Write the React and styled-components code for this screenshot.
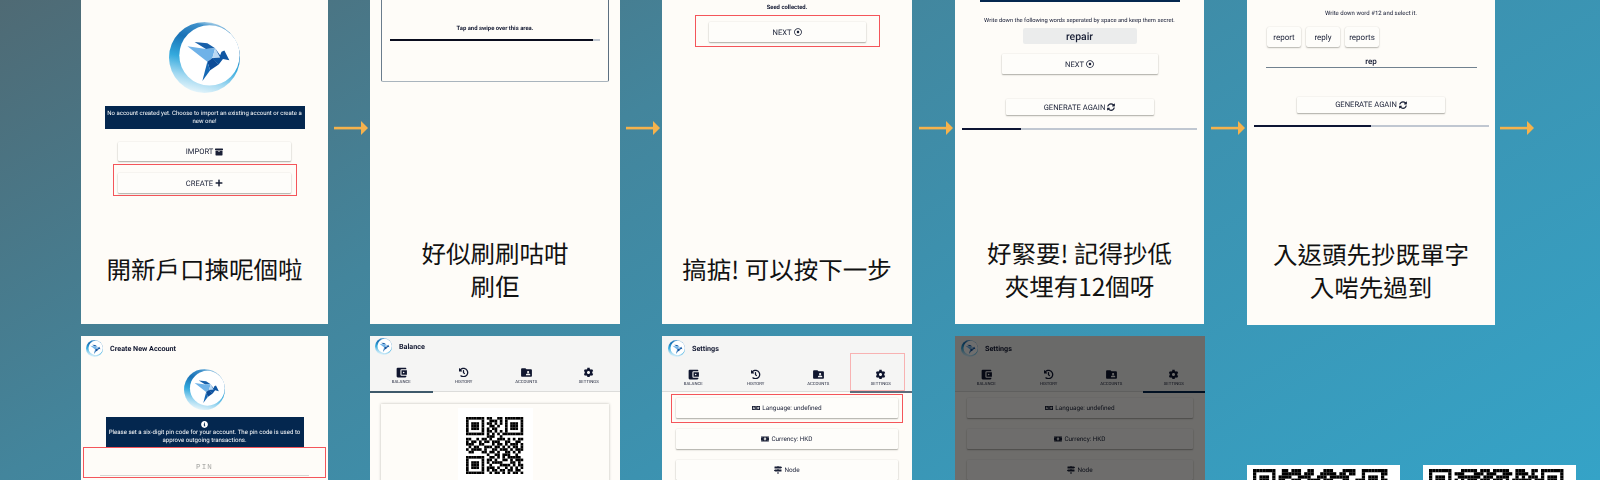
import React, { useId } from "react";
import styled, { createGlobalStyle } from "styled-components";
import {
  FaArchive, FaPlus, FaRegDotCircle, FaSyncAlt, FaHistory, FaCog,
  FaLanguage, FaMoneyBillAlt, FaMapSigns, FaInfoCircle,
} from "react-icons/fa";
import { MdAccountBalanceWallet, MdFolderShared } from "react-icons/md";

const Global = createGlobalStyle`
  html, body { margin: 0; padding: 0; height: 480px; overflow: hidden; }
  body {
    font-family: Roboto, "Liberation Sans", sans-serif;
    text-rendering: geometricPrecision;
  }
`;

const Page = styled.div`
  width: 1600px;
  height: 480px;
  overflow: hidden;
  display: flex;
  flex-direction: column;
  gap: 12px;
  padding-left: 81px;
  box-sizing: border-box;
  background: linear-gradient(150deg, #4f6a74 0%, #43859c 34%, #3c92b0 60%, #35a3c7 100%);
`;
const TopRow = styled.div`
  display: flex;
  height: 324px;
  flex: none;
`;
const BottomRow = styled.div`
  display: flex;
  height: 144px;
  flex: none;
`;
const Card = styled.section`
  position: relative;
  width: ${(p) => p.$w}px;
  height: ${(p) => p.$h || 324}px;
  flex: none;
  display: flex;
  flex-direction: column;
  overflow: hidden;
  background: #fefcf8;
  color: #10162f;
`;
const Screen = styled.div`
  flex: 1;
  min-height: 0;
  display: flex;
  flex-direction: column;
  align-items: center;
  filter: blur(0.25px);
`;
const Caption = styled.div`
  height: 108px;
  flex: none;
  display: flex;
  align-items: center;
  justify-content: center;
  text-align: center;
  font-family: "Noto Sans CJK TC", "Noto Sans CJK SC", sans-serif;
  font-size: 24.5px;
  font-weight: 400;
  line-height: 33.5px;
  color: #111;
`;
const ArrowSlot = styled.div`
  width: ${(p) => p.$w}px;
  flex: none;
  display: flex;
  justify-content: flex-end;
  padding: 121px 2px 0 0;
  box-sizing: border-box;
`;
const Gutter = styled.div`
  width: ${(p) => p.$w}px;
  flex: none;
`;
const Banner = styled.div`
  width: ${(p) => p.$w}px;
  height: ${(p) => p.$h}px;
  margin-top: ${(p) => p.$top}px;
  flex: none;
  display: flex;
  flex-direction: column;
  align-items: center;
  justify-content: center;
  padding: 0 2px;
  box-sizing: border-box;
  background: #04274f;
  color: #fff;
  font-size: ${(p) => p.$size}px;
  line-height: 7.6px;
  text-align: center;
`;
const ActionButton = styled.div`
  width: ${(p) => p.$w}px;
  height: ${(p) => p.$h || 20}px;
  margin-top: ${(p) => p.$top || 0}px;
  flex: none;
  display: flex;
  align-items: center;
  justify-content: center;
  gap: 2px;
  background: #fefdfa;
  border-radius: 1px;
  box-shadow: 0 1px 1.5px rgba(60, 60, 50, 0.4), 0 0 1.5px rgba(60, 60, 50, 0.14);
  color: #1a2036;
  font-size: ${(p) => (p.$plain ? 6.4 : 7.6)}px;
  text-transform: ${(p) => (p.$plain ? "none" : "uppercase")};
  svg { font-size: 8px; flex: none; }
`;
const RedFrame = styled.div`
  width: ${(p) => p.$w}px;
  height: ${(p) => p.$h}px;
  margin-top: ${(p) => p.$top}px;
  flex: none;
  display: flex;
  flex-direction: column;
  align-items: center;
  box-sizing: border-box;
  padding-top: ${(p) => p.$pad}px;
  border: 1.2px solid #f4555a;
`;
const SwipePanel = styled.div`
  width: 228px;
  height: 82px;
  flex: none;
  display: flex;
  flex-direction: column;
  align-items: center;
  padding-top: 24px;
  box-sizing: border-box;
  border-left: 1px solid #6a7c8c;
  border-right: 1px solid #5d6f80;
  border-bottom: 1px solid #a9b4bd;
  border-bottom-left-radius: 2px;
  border-bottom-right-radius: 2px;
`;
const Note = styled.div`
  margin-top: ${(p) => p.$top || 0}px;
  flex: none;
  height: 10px;
  line-height: 10px;
  font-size: ${(p) => p.$size || 6}px;
  font-weight: ${(p) => p.$weight || 400};
  white-space: nowrap;
  color: #10162f;
`;
const Track = styled.div`
  width: ${(p) => p.$w}px;
  height: ${(p) => p.$h || 2}px;
  margin-top: ${(p) => p.$top}px;
  flex: none;
  display: flex;
  background: #c0c7d1;
`;
const TrackFill = styled.div`
  width: ${(p) => p.$fill}%;
  background: ${(p) => p.$color || "#0d1533"};
`;
const WordBox = styled.div`
  width: 114px;
  height: 16px;
  margin-top: 2px;
  flex: none;
  display: flex;
  align-items: center;
  justify-content: center;
  border-radius: 2px;
  background: #ebecec;
  font-size: 10.5px;
  font-weight: 500;
  color: #1a2036;
`;
const ChipRow = styled.div`
  display: flex;
  gap: 5px;
  align-self: flex-start;
  margin: 8px 0 0 20px;
  flex: none;
`;
const Chip = styled.div`
  width: 34px;
  height: 20px;
  display: flex;
  align-items: center;
  justify-content: center;
  border-radius: 2px;
  background: #fefdfa;
  box-shadow: 0 1px 1.5px rgba(60, 60, 50, 0.35), 0 0 1.5px rgba(60, 60, 50, 0.14);
  font-size: 8px;
  color: #1a2036;
`;
const WordInput = styled.div`
  width: 211px;
  height: 10px;
  margin-top: 10px;
  flex: none;
  box-sizing: content-box;
  text-align: center;
  line-height: 10px;
  font-size: 8px;
  font-weight: 500;
  color: #10162f;
  border-bottom: 1.5px solid #71818f;
`;
const AppHeader = styled.header`
  flex: none;
  background: ${(p) => (p.$tabbed ? "#f5f5f4" : "transparent")};
`;
const TitleBar = styled.div`
  display: flex;
  align-items: center;
  gap: 7px;
  height: 17px;
  padding: ${(p) => p.$pad}px 0 0 ${(p) => p.$left}px;
  font-size: 7.2px;
  font-weight: 700;
  color: #10162f;
  filter: blur(0.25px);
`;
const TabBar = styled.nav`
  display: grid;
  grid-template-columns: repeat(4, 1fr);
  border-bottom: 1.5px solid #dcdcda;
`;
const Tab = styled.div`
  position: relative;
  height: ${(p) => p.$h}px;
  display: flex;
  flex-direction: column;
  align-items: center;
  gap: 1.5px;
  box-sizing: border-box;
  padding-top: 10.5px;
  font-size: 4.3px;
  line-height: 6px;
  text-transform: uppercase;
  color: #1a2036;
  svg { flex: none; height: 13px; width: 13px; color: #10162f; }
`;
const TabLabel = styled.span`
  filter: blur(0.2px);
`;
const TabFrame = styled.span`
  position: absolute;
  top: -4px;
  left: 0;
  right: 7px;
  bottom: 0;
  border: 1px solid #f8b2b2;
`;
const TabMark = styled.span`
  position: absolute;
  left: 0;
  right: 0;
  bottom: -1.5px;
  height: 2px;
  background: ${(p) => p.$color};
`;
const StackCol = styled.div`
  display: flex;
  flex-direction: column;
  align-items: center;
  filter: blur(0.25px);
`;
const LogoSlot = styled.div`
  margin-top: ${(p) => p.$top}px;
  flex: none;
  display: flex;
`;
const BalancePanel = styled.div`
  width: 228px;
  height: 90px;
  margin-top: 12px;
  flex: none;
  display: flex;
  justify-content: center;
  background: #fefcf8;
  box-shadow: 0 0 2.5px rgba(60, 60, 50, 0.35);
`;
const QrPad = styled.div`
  width: 75px;
  margin-top: 4px;
  padding-top: 9px;
  display: flex;
  justify-content: center;
  background: #fff;
`;
const PinField = styled.div`
  width: 209px;
  height: 28px;
  box-sizing: border-box;
  padding-top: 16px;
  text-align: center;
  font-family: "Liberation Mono", monospace;
  font-size: 7.5px;
  line-height: 9px;
  letter-spacing: 1.2px;
  color: #a9a9a6;
  border-bottom: 1.5px solid #d6d6d2;
`;
const Dimmer = styled.div`
  position: absolute;
  inset: 0;
  background: rgba(0, 0, 0, 0.57);
`;
const QrTile = styled.div`
  width: 153px;
  height: 15px;
  flex: none;
  align-self: flex-end;
  margin-left: ${(p) => p.$left}px;
  padding: 4px 0 0 6px;
  box-sizing: border-box;
  overflow: hidden;
  background: #fff;
`;

function Logo({ size }) {
  const id = useId();
  return (
    <svg width={size} height={size} viewBox="0 0 100 100" style={{ flex: "none" }}>
      <defs>
        <linearGradient id={id} x1="0.7" y1="0" x2="0.45" y2="1">
          <stop offset="0" stopColor="#d8ecf6" />
          <stop offset="0.1" stopColor="#3e90ca" />
          <stop offset="0.3" stopColor="#1a72b6" />
          <stop offset="0.58" stopColor="#33a9dd" />
          <stop offset="0.82" stopColor="#a0d8f1" />
          <stop offset="1" stopColor="#e2f3fa" />
        </linearGradient>
      </defs>
      <circle cx="50" cy="50" r="50" fill={`url(#${id})`} />
      <circle cx="57" cy="47" r="42.5" fill="#fff" />
      <path d="M62 6 A46 46 0 0 1 98 44 A46 46 0 0 0 62 6Z" fill="#bfe0f2" />
      <polygon points="36,28 54,30 65,37 52,38" fill="#175fa9" />
      <polygon points="26,34 52,38 65,37 61,51 54,56" fill="#6fb2e8" />
      <polygon points="65,37 72,50 61,51" fill="#bcd9f3" />
      <polygon points="65,37 72,47 74,42 78,40 85,54 76,52 70,60 60,51 72,50" fill="#0f56a3" />
      <polygon points="61,51 54,56 58,68 70,60" fill="#0d4c98" />
      <polygon points="54,56 58,68 47,83" fill="#1668b4" />
    </svg>
  );
}

function Arrow() {
  return (
    <svg width="34" height="14" viewBox="0 0 34 14" style={{ flex: "none" }}>
      <rect x="0" y="5.8" width="28" height="2.6" fill="#f5b24c" />
      <polygon points="27,0 34,7 27,14" fill="#f5b24c" />
    </svg>
  );
}

const SMALL_QR = [
  "1111111011001101111111",
  "1000001001110101000001",
  "1011101011010101011101",
  "1011101001101001011101",
  "1011101010110001011101",
  "1000001011010101000001",
  "1111111010101011111111",
  "0000000011100100000000",
  "1100101101001110101011",
  "1011010110111001100110",
  "1110011000101101011101",
  "0101100111011010101101",
  "1011110100110111010111",
  "0110001101101001101010",
  "0000000010011011100100",
  "1111111001101010111110",
  "1000001011010011010111",
  "1011101010111100011010",
  "1011101001000111101011",
  "1011101011101001010101",
  "1000001010110110110110",
  "1111111001011010101101",
];

const TILE_A = [
  "1111111001101110011000111000111100111111110",
  "1000001001111110111001111101101100100000110",
  "1011101011110011110011101111110000101110100",
  "1011101011001110011110111000110011101110110",
  "1011101000111000110011001110011110101110100",
];
const TILE_B = [
  "1111111000111110111011111001110011011111110",
  "1000001011100011101110011101111010010000010",
  "1011101001111111011101111001010111010111010",
  "1011101010101110111011101011111101110111010",
  "1011101011110011010110111100100111010111010",
];

function Qr({ rows, cell }) {
  const cols = rows[0].length;
  return (
    <svg
      width={cols * cell}
      height={rows.length * cell}
      viewBox={`0 0 ${cols} ${rows.length}`}
      style={{ display: "block", flex: "none" }}
    >
      {rows.flatMap((row, y) =>
        [...row].map((v, x) =>
          v === "1" ? <rect key={`${x}-${y}`} x={x} y={y} width="1.02" height="1.02" fill="#000" /> : null
        )
      )}
    </svg>
  );
}

const TABS = [
  ["Balance", <MdAccountBalanceWallet key="b" />],
  ["History", <FaHistory key="h" style={{ padding: 1.5, boxSizing: "border-box" }} />],
  ["Accounts", <MdFolderShared key="a" />],
  ["Settings", <FaCog key="s" style={{ padding: 1.5, boxSizing: "border-box" }} />],
];

function Tabs({ active, color, frame, height }) {
  return (
    <TabBar>
      {TABS.map(([label, icon], i) => (
        <Tab key={label} $h={height}>
          {icon}
          <TabLabel>{label}</TabLabel>
          {i === active && frame && <TabFrame />}
          {i === active && <TabMark $color={color} />}
        </Tab>
      ))}
    </TabBar>
  );
}

function SettingsCard({ w, highlight, dim, markColor }) {
  const bw = dim ? 226 : 222;
  const buttons = [
    [<FaMoneyBillAlt key="c" />, "Currency: HKD"],
    [<FaMapSigns key="n" />, "Node"],
  ];
  return (
    <Card $w={w} $h={144}>
      <AppHeader $tabbed>
        <TitleBar $pad={4} $left={6}>
          <Logo size={17} />
          Settings
        </TitleBar>
        <Tabs active={3} color={markColor} frame={highlight} height={34} />
      </AppHeader>
      <StackCol>
        {highlight ? (
          <RedFrame $w={232} $h={29} $top={2} $pad={3}>
            <ActionButton $w={bw} $plain>
              <FaLanguage />
              Language: undefined
            </ActionButton>
          </RedFrame>
        ) : (
          <ActionButton $w={bw} $plain $top={6}>
            <FaLanguage />
            Language: undefined
          </ActionButton>
        )}
        {buttons.map(([icon, text], i) => (
          <ActionButton key={text} $w={bw} $plain $top={highlight && i === 0 ? 6 : 11}>
            {icon}
            {text}
          </ActionButton>
        ))}
      </StackCol>
      {dim && <Dimmer />}
    </Card>
  );
}

export default function App() {
  return (
    <Page>
      <Global />
      <TopRow>
        <Card $w={247}>
          <Screen>
            <LogoSlot $top={22}>
              <Logo size={71} />
            </LogoSlot>
            <Banner $w={200} $h={23} $top={13} $size={6}>
              No account created yet. Choose to import an existing account or create a new one!
            </Banner>
            <ActionButton $w={173} $h={19} $top={13}>
              Import <FaArchive />
            </ActionButton>
            <RedFrame $w={184} $h={32} $top={3} $pad={8}>
              <ActionButton $w={173}>
                Create <FaPlus />
              </ActionButton>
            </RedFrame>
          </Screen>
          <Caption>開新戶口揀呢個啦</Caption>
        </Card>
        <ArrowSlot $w={42}>
          <Arrow />
        </ArrowSlot>
        <Card $w={250}>
          <Screen>
            <SwipePanel>
              <Note $weight={700} $size={5.9}>Tap and swipe over this area.</Note>
              <Track $w={210} $top={5} $h={1.6}>
                <TrackFill $fill={96.7} $color="#0a0d1e" />
              </Track>
            </SwipePanel>
          </Screen>
          <Caption>
            好似刷刷咕咁
            <br />
            刷佢
          </Caption>
        </Card>
        <ArrowSlot $w={42}>
          <Arrow />
        </ArrowSlot>
        <Card $w={250}>
          <Screen>
            <Note $weight={700} $top={3} $size={5.9}>Seed collected.</Note>
            <RedFrame $w={185} $h={32} $top={2} $pad={6}>
              <ActionButton $w={157}>
                Next <FaRegDotCircle />
              </ActionButton>
            </RedFrame>
          </Screen>
          <Caption>搞掂! 可以按下一步</Caption>
        </Card>
        <ArrowSlot $w={43}>
          <Arrow />
        </ArrowSlot>
        <Card $w={249}>
          <Screen>
            <Track $w={200} $h={2} $top={0}>
              <TrackFill $fill={100} $color="#04274f" />
            </Track>
            <Note $top={14} $size={5.8}>
              Write down the following words seperated by space and keep them secret.
            </Note>
            <WordBox>repair</WordBox>
            <ActionButton $w={156} $top={10}>
              Next <FaRegDotCircle />
            </ActionButton>
            <ActionButton $w={148} $h={16} $top={25}>
              Generate again <FaSyncAlt />
            </ActionButton>
            <Track $w={235} $top={12.5}>
              <TrackFill $fill={25} />
            </Track>
          </Screen>
          <Caption>
            好緊要! 記得抄低
            <br />
            夾埋有12個呀
          </Caption>
        </Card>
        <ArrowSlot $w={43}>
          <Arrow />
        </ArrowSlot>
        <Card $w={248} $h={325}>
          <Screen>
            <Note $top={9} $size={6}>Write down word #12 and select it.</Note>
            <ChipRow>
              <Chip>report</Chip>
              <Chip>reply</Chip>
              <Chip>reports</Chip>
            </ChipRow>
            <WordInput>rep</WordInput>
            <ActionButton $w={148} $h={16} $top={28.5}>
              Generate again <FaSyncAlt />
            </ActionButton>
            <Track $w={235} $top={12.5}>
              <TrackFill $fill={50} />
            </Track>
          </Screen>
          <Caption>
            入返頭先抄既單字
            <br />
            入啱先過到
          </Caption>
        </Card>
        <ArrowSlot $w={41}>
          <Arrow />
        </ArrowSlot>
      </TopRow>
      <BottomRow>
        <Card $w={247} $h={144}>
          <AppHeader>
            <TitleBar $pad={4} $left={5}>
              <Logo size={17} />
              Create New Account
            </TitleBar>
          </AppHeader>
          <StackCol>
            <LogoSlot $top={12}>
              <Logo size={41} />
            </LogoSlot>
            <Banner $w={198} $h={31} $top={7} $size={6.1}>
              <FaInfoCircle style={{ fontSize: 7, marginBottom: 1, flex: "none" }} />
              Please set a six-digit pin code for your account. The pin code is used to approve outgoing transactions.
            </Banner>
            <RedFrame $w={243} $h={31} $top={-1} $pad={0}>
              <PinField>PIN</PinField>
            </RedFrame>
          </StackCol>
        </Card>
        <Gutter $w={42} />
        <Card $w={250} $h={144}>
          <AppHeader $tabbed>
            <TitleBar $pad={2} $left={5}>
              <Logo size={17} />
              Balance
            </TitleBar>
            <Tabs active={0} color="#3f5a6b" height={36} />
          </AppHeader>
          <StackCol>
            <BalancePanel>
              <QrPad>
                <Qr rows={SMALL_QR} cell={2.6} />
              </QrPad>
            </BalancePanel>
          </StackCol>
        </Card>
        <Gutter $w={42} />
        <SettingsCard w={250} highlight markColor="#5d6c7b" />
        <Gutter $w={43} />
        <SettingsCard w={250} dim markColor="#04274f" />
        <QrTile $left={42}>
          <Qr rows={TILE_A} cell={3.2} />
        </QrTile>
        <QrTile $left={23}>
          <Qr rows={TILE_B} cell={3.2} />
        </QrTile>
      </BottomRow>
    </Page>
  );
}
